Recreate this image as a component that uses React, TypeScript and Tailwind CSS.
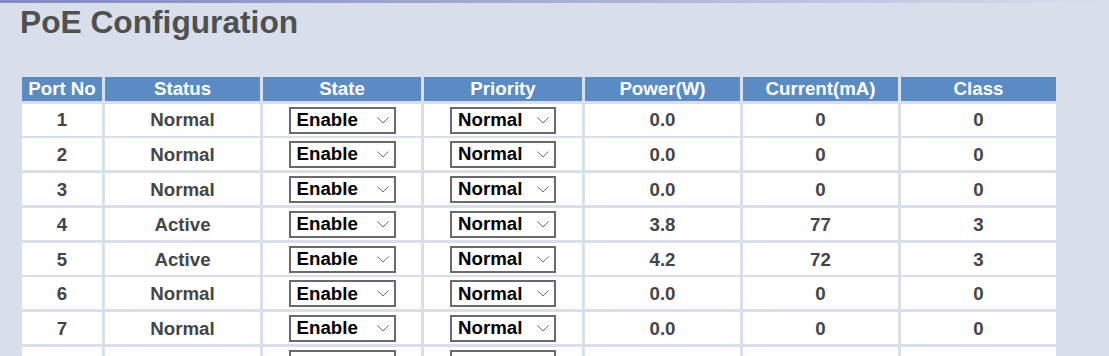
import React from "react";

const rows = [
  { port: "1", status: "Normal", power: "0.0", current: "0", cls: "0" },
  { port: "2", status: "Normal", power: "0.0", current: "0", cls: "0" },
  { port: "3", status: "Normal", power: "0.0", current: "0", cls: "0" },
  { port: "4", status: "Active", power: "3.8", current: "77", cls: "3" },
  { port: "5", status: "Active", power: "4.2", current: "72", cls: "3" },
  { port: "6", status: "Normal", power: "0.0", current: "0", cls: "0" },
  { port: "7", status: "Normal", power: "0.0", current: "0", cls: "0" },
];

const headers = ["Port No", "Status", "State", "Priority", "Power(W)", "Current(mA)", "Class"];

function Chevron() {
  return (
    <svg width="12" height="7" viewBox="0 0 12 7" className="shrink-0">
      <path d="M0.5 0.5 L6 6 L11.5 0.5" fill="none" stroke="#6f6f6f" strokeWidth="1" />
    </svg>
  );
}

function FakeSelect({ value, width }: { value: string; width: string }) {
  return (
    <div
      className={`${width} h-[27px] border-2 border-[#6a6a6a] bg-white flex items-center justify-between pl-[6px] pr-[5px] text-black`}
    >
      <span className="leading-none">{value}</span>
      <Chevron />
    </div>
  );
}

const cell = "h-[32px] bg-white text-[#454545] flex items-center justify-center pt-[2px]";
const selCell = "h-[32px] bg-white flex items-center justify-center pt-[1px]";

export default function App() {
  return (
    <div
      className="w-[1109px] h-[356px] overflow-hidden bg-[#d8dfeb] relative"
      style={{ fontFamily: '"Liberation Sans", Arial, sans-serif' }}
    >
      <div className="absolute left-0 top-0 w-full h-[3px] bg-gradient-to-r from-[#8489c2] via-[#a8add4] to-[#d8dfeb]" />
      <div className="pl-[20px] pt-[7px]">
        <h1 className="text-[31.7px] leading-none font-bold text-[#505050]">PoE Configuration</h1>
      </div>
      <div className="ml-[22px] mt-[38px] grid grid-cols-[80px_155px_158px_158px_155px_155px_155px] gap-x-[3px] gap-y-[2.8px] text-[18.7px] font-bold">
        {headers.map((h) => (
          <div key={h} className="h-[24px] leading-[24px] bg-[#5a8bc4] text-white text-center">
            {h}
          </div>
        ))}
        {rows.map((r) => (
          <React.Fragment key={r.port}>
            <div className={cell}>{r.port}</div>
            <div className={cell}>{r.status}</div>
            <div className={selCell}>
              <FakeSelect value="Enable" width="w-[107px]" />
            </div>
            <div className={selCell}>
              <FakeSelect value="Normal" width="w-[106px]" />
            </div>
            <div className={cell}>{r.power}</div>
            <div className={cell}>{r.current}</div>
            <div className={cell}>{r.cls}</div>
          </React.Fragment>
        ))}
        <div className="h-[32px] bg-white" />
        <div className="h-[32px] bg-white" />
        <div className={selCell}>
          <div className="w-[107px] h-[27px] border-2 border-[#6a6a6a] bg-white" />
        </div>
        <div className={selCell}>
          <div className="w-[106px] h-[27px] border-2 border-[#6a6a6a] bg-white" />
        </div>
        <div className="h-[32px] bg-white" />
        <div className="h-[32px] bg-white" />
        <div className="h-[32px] bg-white" />
      </div>
    </div>
  );
}
